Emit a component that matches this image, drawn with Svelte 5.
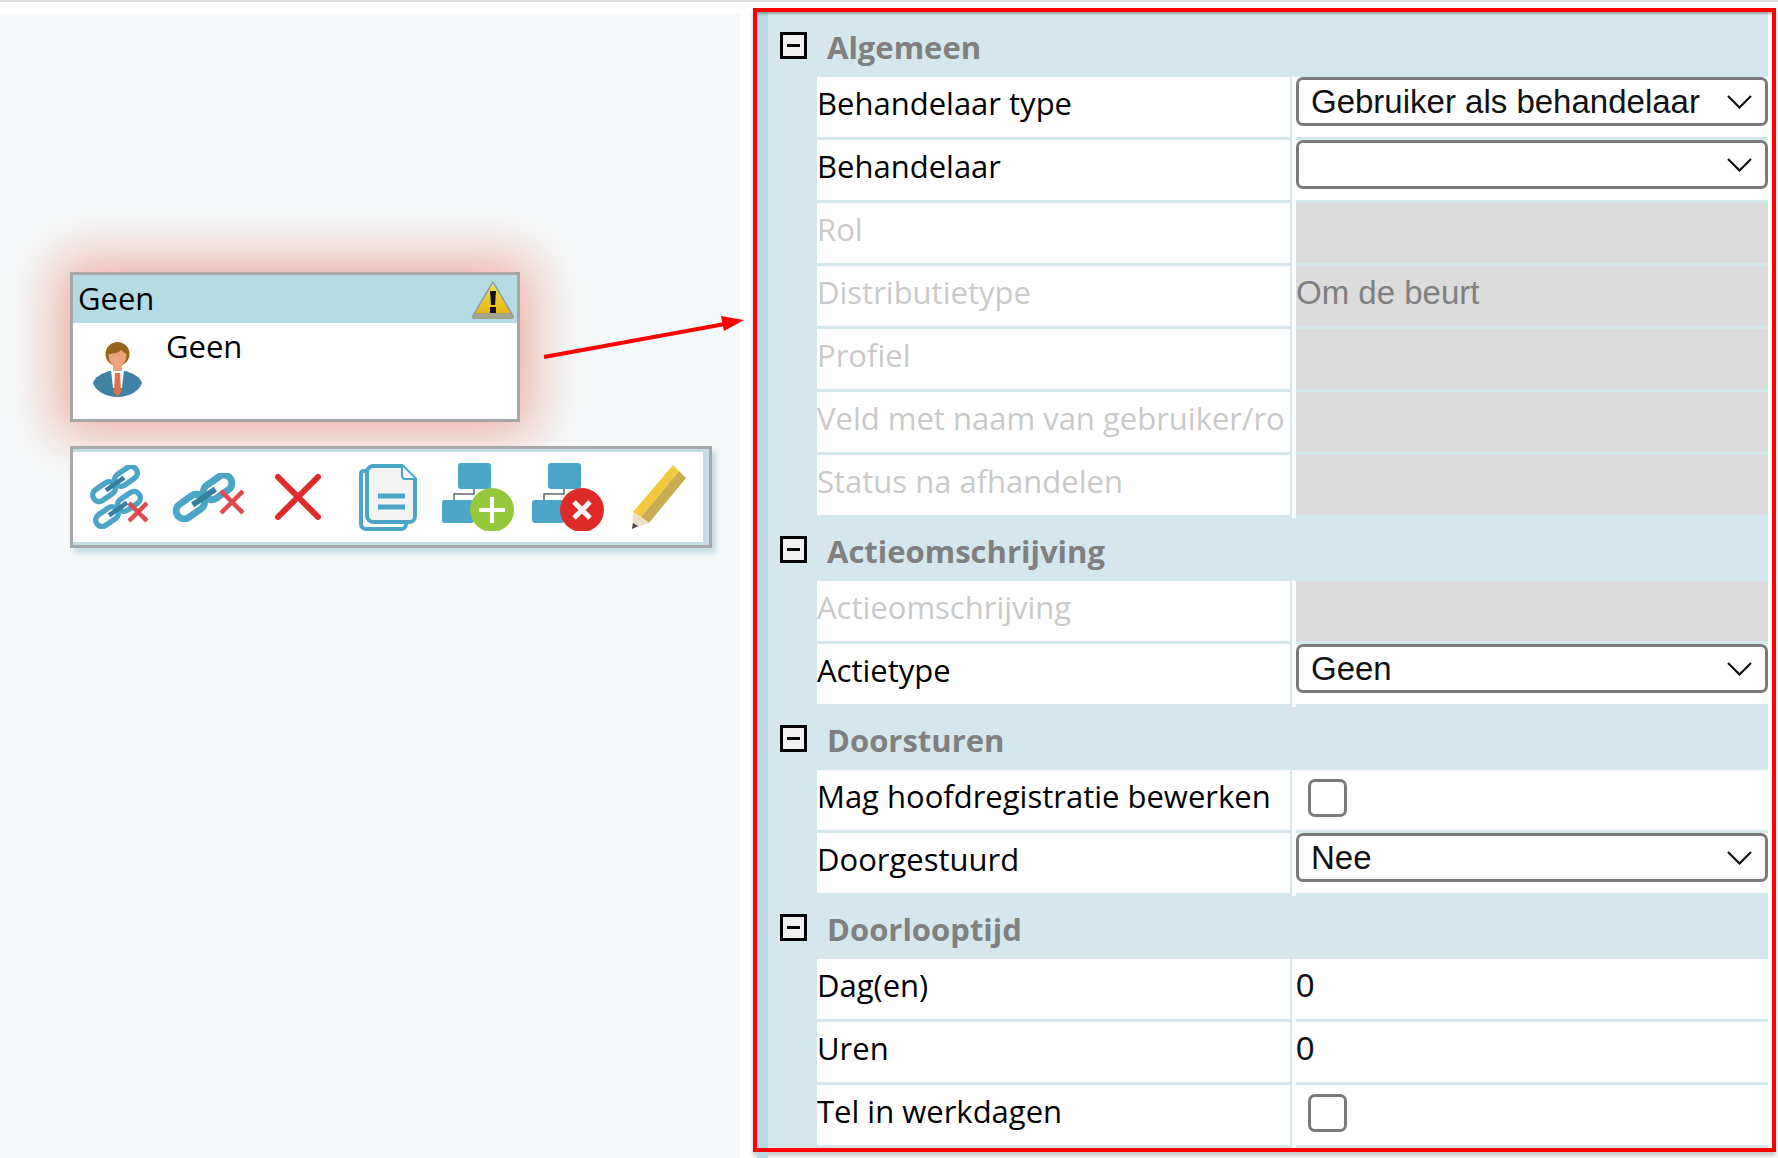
<script>
    const sections = [
        {
            title: 'Algemeen',
            rows: [
                { label: 'Behandelaar type', type: 'select', value: 'Gebruiker als behandelaar' },
                { label: 'Behandelaar', type: 'select', value: '' },
                { label: 'Rol', type: 'disabled', value: '' },
                { label: 'Distributietype', type: 'disabled', value: 'Om de beurt' },
                { label: 'Profiel', type: 'disabled', value: '' },
                { label: 'Veld met naam van gebruiker/rol', type: 'disabled', value: '' },
                { label: 'Status na afhandelen', type: 'disabled', value: '' }
            ]
        },
        {
            title: 'Actieomschrijving',
            rows: [
                { label: 'Actieomschrijving', type: 'disabled', value: '' },
                { label: 'Actietype', type: 'select', value: 'Geen' }
            ]
        },
        {
            title: 'Doorsturen',
            rows: [
                { label: 'Mag hoofdregistratie bewerken', type: 'check' },
                { label: 'Doorgestuurd', type: 'select', value: 'Nee' }
            ]
        },
        {
            title: 'Doorlooptijd',
            rows: [
                { label: 'Dag(en)', type: 'text', value: '0' },
                { label: 'Uren', type: 'text', value: '0' },
                { label: 'Tel in werkdagen', type: 'check' }
            ]
        }
    ];
</script>

{#snippet chain(x, y, s)}
    <g transform="translate({x} {y}) rotate(-35) scale({s})" fill="none">
        <rect x="-28" y="-7" width="27" height="14" rx="7" stroke="#4ba5c6" stroke-width="6" />
        <rect x="1" y="-7" width="27" height="14" rx="7" stroke="#4ba5c6" stroke-width="6" />
        <path d="M-12 0H12" stroke="#357f9f" stroke-width="5" />
    </g>
{/snippet}

{#snippet cross(x, y, r)}
    <path d="M{x - r} {y - r}L{x + r} {y + r}M{x + r} {y - r}L{x - r} {y + r}" stroke="#df4a50" stroke-width="4.500" />
{/snippet}

{#snippet network()}
    <rect x="16" y="0" width="33" height="26" rx="3" fill="#4ba5c6" />
    <rect x="0" y="37" width="32" height="23" rx="3" fill="#4ba5c6" />
    <path d="M32 26V31H12V37" fill="none" stroke="#666" stroke-width="1.5" />
{/snippet}

<div class="topline"></div>
<div class="page">
    <div class="canvas">
        <div class="card">
            <div class="card-head">
                <span>Geen</span>
                <svg class="warn" width="42" height="39" viewBox="0 0 42 39">
                    <defs>
                        <linearGradient id="warnfill" x1="0" y1="0" x2="0" y2="1">
                            <stop offset="0" stop-color="#f8e24a" />
                            <stop offset="1" stop-color="#e3b60e" />
                        </linearGradient>
                    </defs>
                    <path d="M21 1L40 33H2Z" fill="url(#warnfill)" stroke="#8d9cb0" stroke-width="1.5" stroke-linejoin="round" />
                    <rect x="0" y="33" width="42" height="5" rx="2" fill="#a3a58e" />
                    <path d="M18 10H24L23 24H19Z" fill="#111" />
                    <rect x="18" y="26" width="6" height="6" fill="#111" />
                </svg>
            </div>
            <div class="card-body">
                <svg width="49" height="56" viewBox="0 0 49 56">
                    <path d="M16 29C8 32 2 35 0 41C2 48 12 55 24.500 55C37 55 47 48 49 41C47 35 41 32 33 29Z" fill="#3f82a3" />
                    <path d="M18 28H31L29 46H20Z" fill="#fff" />
                    <path d="M22 31H27L28 50L24.500 55L21 50Z" fill="#e2704a" />
                    <rect x="20" y="20" width="9" height="9" fill="#eca27a" />
                    <circle cx="24.500" cy="12" r="12" fill="#96651c" />
                    <path d="M15.500 12C19 12 26 11 28 8C30 10 32 11 33.500 12C33.500 20 29 25 24.500 25C20 25 15.500 20 15.500 12Z" fill="#eca27a" />
                </svg>
                <span>Geen</span>
            </div>
        </div>

        <div class="toolbar">
            <div class="slot">
                <svg width="60" height="64" viewBox="0 0 60 64">
                    {@render chain(27, 19, 0.92)}
                    {@render chain(30, 44, 0.92)}
                    {@render cross(50, 47, 9)}
                </svg>
            </div>
            <div class="slot">
                <svg width="72" height="49" viewBox="0 0 72 49">
                    {@render chain(32, 24, 1.15)}
                    {@render cross(60, 29, 11)}
                </svg>
            </div>
            <div class="slot">
                <svg width="48" height="48" viewBox="0 0 48 48">
                    <path d="M4 4L44 44M44 4L4 44" stroke="#df2a2a" stroke-width="6" stroke-linecap="round" />
                </svg>
            </div>
            <div class="slot">
                <svg width="58" height="67" viewBox="0 0 58 67">
                    <path d="M8 7H5C3 7 2 8 2 10V60C2 63 4 65 7 65H42C45 65 47 63 47 60" fill="none" stroke="#4ba5c6" stroke-width="4" />
                    <path d="M14 2H43L56 15V52C56 55 54 58 51 58H14C11 58 8 55 8 52V8C8 5 11 2 14 2Z" fill="#f3f3f3" stroke="#4ba5c6" stroke-width="4" />
                    <path d="M43 2V11C43 14 44 15 46 15H56" fill="#fff" stroke="#4ba5c6" stroke-width="2" />
                    <path d="M19 32H46M19 43H46" stroke="#4ba5c6" stroke-width="5" />
                </svg>
            </div>
            <div class="slot">
                <svg width="72" height="68" viewBox="0 0 72 68">
                    {@render network()}
                    <circle cx="50" cy="47" r="22" fill="#94c83d" />
                    <path d="M50 34V60M37 47H63" stroke="#fff" stroke-width="4" />
                </svg>
            </div>
            <div class="slot">
                <svg width="72" height="68" viewBox="0 0 72 68">
                    {@render network()}
                    <circle cx="50" cy="47" r="22" fill="#df2a2a" />
                    <path d="M42 39L58 55M58 39L42 55" stroke="#fff" stroke-width="5" />
                </svg>
            </div>
            <div class="slot">
                <svg width="55" height="65" viewBox="0 0 55 65">
                    <path d="M2 47L18 58L1 64Z" fill="#e8e0c8" />
                    <path d="M1 64L2 58L7 61Z" fill="#444" />
                    <path d="M42 0L2 47L10 52L48 6Z" fill="#f3c93c" />
                    <path d="M48 6L10 52L18 58L55 13Z" fill="#c9ad52" />
                </svg>
            </div>
        </div>
    </div>

    <div class="panel">
        {#each sections as section}
            <div class="section">
                <div class="section-head">
                    <span class="toggle"></span>
                    <h3>{section.title}</h3>
                </div>
                {#each section.rows as row}
                    <div class="row">
                        <div class="label" class:off={row.type === 'disabled'}><span>{row.label}</span></div>
                        <div class="value-col">
                            <div class="value" class:grey={row.type === 'disabled'}>
                                {#if row.type === 'select'}
                                    <div class="select">
                                        <span>{row.value}</span>
                                        <svg width="25" height="14" viewBox="0 0 25 14">
                                            <path d="M1 1L12.500 12.500L24 1" fill="none" stroke="#111" stroke-width="2.200" />
                                        </svg>
                                    </div>
                                {:else if row.type === 'check'}
                                    <div class="check"></div>
                                {:else}
                                    <span class="text">{row.value}</span>
                                {/if}
                            </div>
                        </div>
                    </div>
                {/each}
            </div>
        {/each}
    </div>

    <svg class="arrow" width="220" height="60" viewBox="0 0 220 60">
        <path d="M4 47L185 14" stroke="#f00" stroke-width="4" />
        <path d="M204 10L181 6L184 21Z" fill="#f00" />
    </svg>
</div>

<style>
    :global(body) {
        background: #fff;
    }
    .topline {
        height: 2px;
        background: #dcdcdc;
    }
    .page {
        position: relative;
        display: flex;
        height: 1156px;
        overflow: hidden;
        font-family: "Open Sans", sans-serif;
        color: #000;
    }
    .canvas {
        width: 740px;
        margin-top: 12px;
        padding: 258px 0 0 70px;
        box-sizing: border-box;
        background: #f5f9fa;
    }
    .card {
        width: 450px;
        height: 150px;
        box-sizing: border-box;
        border: 3px solid #a8a8a8;
        background: #fff;
        box-shadow: 0 0 50px 12px rgba(230, 100, 75, 0.52);
        font-size: 31px;
    }
    .card-head {
        display: flex;
        justify-content: space-between;
        align-items: center;
        height: 48px;
        padding: 0 3px 0 5px;
        background: #b5dbe4;
    }
    .card-head span {
        margin-bottom: 3px;
    }
    .warn {
        margin-top: 3px;
        filter: blur(0.5px);
    }
    .card-body {
        display: flex;
        align-items: flex-start;
        padding: 19px 0 0 20px;
    }
    .card-body svg {
        filter: blur(0.5px);
    }
    .card-body span {
        margin: -17px 0 0 24px;
    }
    .toolbar {
        display: flex;
        width: 642px;
        height: 102px;
        margin-top: 24px;
        box-sizing: border-box;
        border: 3px solid #a8a8a8;
        background: #fff;
        box-shadow: inset -6px 0 0 #c5dde4, inset 0 3px 0 #c5dde4, inset 0 -3px 0 #c5dde4, 4px 5px 5px #c5dde4;
    }
    .slot {
        display: flex;
        justify-content: center;
        align-items: center;
        width: 90px;
        flex: none;
    }
    .slot svg {
        filter: blur(0.7px);
    }
    .panel {
        position: relative;
        width: 1023px;
        height: 1144px;
        margin: 6px 0 0 13px;
        box-sizing: border-box;
        border: 4px solid #f00;
        background: #d5e7ed;
        box-shadow: inset 0 3px 2px -1px rgba(90, 90, 90, 0.45), inset 11px 0 0 #b5dae4, inset -4px 0 0 #fff, 0 4px 4px #c9c9c9;
    }
    .panel::after {
        content: "";
        position: absolute;
        left: 0;
        top: calc(100% + 4px);
        width: 11px;
        height: 8px;
        background: #b5dae4;
    }
    .section-head {
        display: flex;
        align-items: flex-start;
        height: 63px;
    }
    .section:first-child .section-head {
        height: 65px;
    }
    .toggle {
        position: relative;
        width: 27px;
        height: 27px;
        margin: 18px 0 0 23px;
        box-sizing: border-box;
        border: 3px solid #000;
        background: #f0f0f0;
    }
    .section:first-child .toggle {
        margin-top: 20px;
    }
    .toggle::after {
        content: "";
        position: absolute;
        left: 4px;
        right: 4px;
        top: 9px;
        height: 3px;
        background: #000;
    }
    h3 {
        margin: 10px 0 0 20px;
        font-size: 31px;
        font-weight: 700;
        color: #808080;
        line-height: 46px;
    }
    .section:first-child h3 {
        margin-top: 12px;
    }
    .row {
        display: flex;
        height: 63px;
        padding-left: 60px;
    }
    .label {
        display: flex;
        align-items: center;
        width: 473px;
        height: 60px;
        padding-bottom: 8px;
        box-sizing: border-box;
        background: #fff;
        font-size: 31px;
        white-space: nowrap;
    }
    .label span {
        max-width: 469px;
        overflow: hidden;
    }
    .label.off {
        color: #c9c9c9;
    }
    .value-col {
        width: 476px;
        margin-left: 2px;
        padding-left: 4px;
        box-sizing: border-box;
        background: #fff;
    }
    .value {
        display: flex;
        align-items: center;
        height: 63px;
        box-sizing: border-box;
        border-bottom: 3px solid #d5e7ed;
        background: #fff;
        font-family: "Liberation Sans", sans-serif;
        font-size: 33px;
        color: #111;
    }
    .value.grey {
        background: #dcdcdc;
        color: #808080;
    }
    .text {
        margin-bottom: 7px;
    }
    .select {
        display: flex;
        justify-content: space-between;
        align-items: center;
        width: 100%;
        height: 49px;
        margin-bottom: 11px;
        padding: 0 13px 0 12px;
        box-sizing: border-box;
        border: 3px solid #7a7a7a;
        border-radius: 7px;
        background: #fff;
    }
    .check {
        width: 39px;
        height: 38px;
        margin: 0 0 4px 12px;
        box-sizing: border-box;
        border: 3px solid #7a7a7a;
        border-radius: 7px;
        background: #fff;
    }
    .arrow {
        position: absolute;
        left: 540px;
        top: 308px;
    }
</style>
